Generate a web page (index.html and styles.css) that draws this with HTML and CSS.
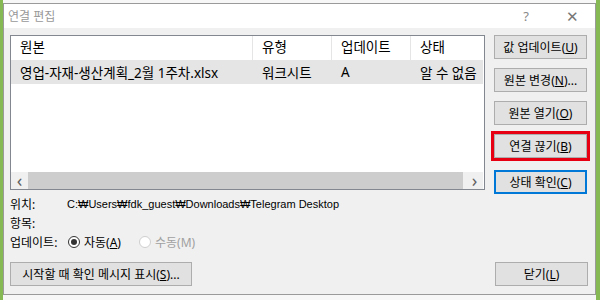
FILE: index.html
```html
<!DOCTYPE html>
<html lang="ko">
<head>
  <meta charset="UTF-8">
  <title>연결 편집</title>
  <link rel="stylesheet" href="styles.css">
</head>
<body>
  <div class="desk">
    <div class="dialog">
      <div class="titlebar">
        <span class="title">연결 편집</span>
        <span class="tb-btns"><span class="help">?</span><span class="close">✕</span></span>
      </div>
      <div class="content">
        <div class="top">
          <div class="list">
            <div class="row head">
              <div class="c1">원본</div>
              <div class="c2">유형</div>
              <div class="c3">업데이트</div>
              <div class="c4">상태</div>
            </div>
            <div class="row sel">
              <div class="c1">영업-자재-생산계획_2월 1주차.xlsx</div>
              <div class="c2">워크시트</div>
              <div class="c3">A</div>
              <div class="c4">알 수 없음</div>
            </div>
            <div class="fill"></div>
            <div class="hscroll">
              <span class="arr">&lsaquo;</span>
              <span class="track"></span>
              <span class="arr">&rsaquo;</span>
            </div>
          </div>
          <div class="side">
            <div class="btn"><span>값 업데이트(<u>U</u>)</span></div>
            <div class="btn"><span>원본 변경(<u>N</u>)...</span></div>
            <div class="btn"><span>원본 열기(<u>O</u>)</span></div>
            <div class="mark"><div class="btn"><span>연결 끊기(<u>B</u>)</span></div></div>
            <div class="btn default"><span>상태 확인(<u>C</u>)</span></div>
          </div>
        </div>
        <div class="info">
          <div class="line"><span class="lbl">위치:</span><span class="path">C:₩Users₩fdk_guest₩Downloads₩Telegram Desktop</span></div>
          <div class="line"><span class="lbl">항목:</span></div>
          <div class="line"><span class="lbl">업데이트:</span>
            <span class="radio on"></span><span class="rtext">자동(<u>A</u>)</span>
            <span class="radio off"></span><span class="rtext dis">수동(M)</span>
          </div>
        </div>
        <div class="bottom">
          <div class="btn wide"><span>시작할 때 확인 메시지 표시(<u>S</u>)...</span></div>
          <div class="btn"><span>닫기(<u>L</u>)</span></div>
        </div>
      </div>
    </div>
  </div>
</body>
</html>
```

FILE: styles.css
```css
body {
  margin:0; padding:0;
  font-family: "Noto Sans", "Noto Sans CJK KR", sans-serif;
  font-size:13px; color:#000;
}
.desk {
  width:600px; height:300px; box-sizing:border-box;
  padding:3px 4px 5px 3px;
  background:
    linear-gradient(to right, #86b953 0, #86b953 3px, transparent 3px),
    linear-gradient(to left, #86b953 0, #86b953 4px, transparent 4px),
    #f7f7f7;
}
.dialog {
  height:100%; box-sizing:border-box;
  border:1px solid #9a9a9a;
  background:#f0f0f0;
  display:flex; flex-direction:column;
}
.titlebar {
  height:24px; background:#fff;
  display:flex; justify-content:space-between; align-items:center;
  padding:0 0 0 4px;
}
.title { color:#999; font-size:12px; }
.tb-btns { display:flex; align-items:center; color:#888; }
.help { width:46px; text-align:center; font-size:13px; }
.close { width:46px; text-align:center; font-size:15px; color:#777; }
.content {
  flex:1; display:flex; flex-direction:column;
  padding:7px 7px 8px 6px;
}
.top { display:flex; gap:9px; }
.list {
  width:475px; height:155px; box-sizing:border-box;
  border:1px solid #828790; background:#fff;
  display:flex; flex-direction:column;
  font-size:13.5px;
}
.row { display:flex; height:24px; align-items:center; }
.row > div { box-sizing:border-box; padding-left:9px; white-space:nowrap; overflow:hidden; }
.c1 { width:242px; }
.c2 { width:79px; }
.c3 { width:79px; }
.c4 { flex:1; }
.head > div { height:24px; line-height:23px; border-right:1px solid #e5e5e5; }
.head > .c4 { border-right:none; }
.sel { background:#e5e5e5; margin-right:1px; }
.fill { flex:1; }
.hscroll {
  height:17px; display:flex; align-items:center;
  background:#f0f0f0; margin:0 1px 0 0;
}
.hscroll .arr { width:17px; text-align:center; font-size:18px; line-height:15px; color:#606060; }
.track { flex:1; height:17px; background:#cdcdcd; margin-right:3px; }
.side { display:flex; flex-direction:column; width:93px; }
.btn {
  width:93px; height:24px; box-sizing:border-box;
  border:1px solid #adadad; background:#e1e1e1;
  display:flex; align-items:center; justify-content:center;
  font-size:12px; white-space:nowrap;
}
.side > .btn, .side > .mark { margin-bottom:9px; }
.side > .btn:last-child { margin-bottom:0; }
.mark {
  border:3px solid #e60012; margin:-3px -3px 6px -3px;
  display:flex;
}
.btn.default { border:2px solid #0078d7; }
.info { padding:0; }
.line { display:flex; align-items:center; height:19px; font-size:12px; }
.lbl { width:57px; }
.path { font-family:"Liberation Sans", Arial, sans-serif; font-size:11px; }
.radio {
  width:12px; height:12px; box-sizing:border-box; border-radius:50%;
  border:1px solid #333; background:#fff; margin:0 4px 0 1px;
  display:inline-flex; align-items:center; justify-content:center;
}
.radio.on::after { content:""; width:6px; height:6px; border-radius:50%; background:#333; }
.radio.off { border-color:#cfcfcf; margin-left:18px; }
.rtext.dis { color:#a0a0a0; }
.bottom {
  margin-top:auto;
  display:flex; justify-content:space-between;
}
.btn.wide { width:182px; }
```
